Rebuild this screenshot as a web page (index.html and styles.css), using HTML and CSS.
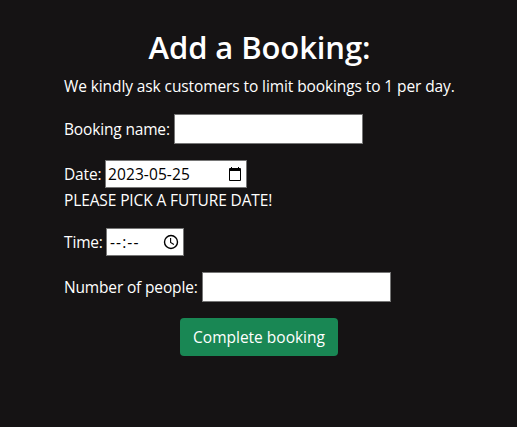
FILE: index.html
```html
<!DOCTYPE html>
<html lang="en">
<head>
<meta charset="utf-8">
<title>Add a Booking</title>
<link rel="stylesheet" href="styles.css">
</head>
<body>
<main class="booking">
  <h1 class="title"><span>Add a Booking:</span></h1>
  <p class="intro"><span>We kindly ask customers to limit bookings to 1 per day.</span></p>
  <form class="form">
    <div class="row">
      <label class="label label-name" for="name">Booking name:</label>
      <input class="field text-field" id="name" type="text">
    </div>
    <div class="row row-date">
      <span class="label label-date">Date:</span>
      <div class="field date-field">
        <span class="date-value">2023-05-25</span>
        <svg class="icon" viewBox="0 0 16 16"><path fill="#000" fill-rule="evenodd" d="M4 1h1v1h6V1h1v1h1q1 0 1 1v11q0 1-1 1H3q-1 0-1-1V3q0-1 1-1h1zM3 5v9h10V5z"/></svg>
      </div>
    </div>
    <p class="error"><span>PLEASE PICK A FUTURE DATE!</span></p>
    <div class="row row-time">
      <span class="label label-time">Time:</span>
      <div class="field time-field">
        <span class="time-value">--:--</span>
        <svg class="icon" viewBox="0 0 16 16" fill="none" stroke="#000"><circle cx="8" cy="8" r="6.500" stroke-width="1.400"/><path stroke-width="1.100" d="M7.600 4v4.500l3.300 2"/></svg>
      </div>
    </div>
    <div class="row">
      <label class="label label-people" for="people">Number of people:</label>
      <input class="field text-field" id="people" type="text">
    </div>
    <button class="submit" type="button">Complete booking</button>
  </form>
</main>
</body>
</html>
```
FILE: styles.css
```css
* {
  box-sizing: border-box;
}

body {
  margin: 0;
  min-height: 427px;
  background: #151314;
  color: #fff;
  font: 15.5px/24px "Open Sans", "Noto Sans", sans-serif;
}

.booking {
  width: 391px;
  margin-left: 64px;
  padding-top: 28px;
  white-space: nowrap;
}

.title {
  margin: 0 0 8px;
  font-size: 31px;
  font-weight: 600;
  line-height: 38px;
  text-align: center;
  letter-spacing: -0.1px;
}

.intro {
  margin: 0 0 16px;
  letter-spacing: -0.1px;
}

.row {
  display: flex;
  align-items: center;
  gap: 4px;
  height: 30px;
  margin-bottom: 16px;
}

.row-date,
.row-time {
  height: 28px;
}

.row-date {
  margin-bottom: 0;
}

.label {
  flex: none;
  letter-spacing: -0.16px;
}

.label-name { width: 106px; }
.label-date { width: 37px; }
.label-time { width: 38px; }
.label-people { width: 134px; }

.field {
  background: #fff;
  color: #000;
  border: 1px solid #767676;
}

.text-field {
  width: 189px;
  height: 30px;
  padding: 1px 2px;
  font: inherit;
}

.date-field,
.time-field {
  display: flex;
  align-items: center;
  justify-content: space-between;
  height: 28px;
}

.date-field {
  width: 142px;
  padding: 0 3px 0 2px;
}

.date-value {
  letter-spacing: 0.1px;
}

.time-field {
  width: 78px;
  padding: 0 4px 0 3px;
}

.time-value {
  letter-spacing: 1.1px;
}

.icon {
  width: 16px;
  height: 16px;
}

.error {
  margin: 0 0 16px;
  letter-spacing: -0.12px;
}

.submit {
  display: block;
  width: 158px;
  height: 38px;
  margin: 0 0 0 116px;
  padding: 0;
  border: 0;
  border-radius: 4px;
  background: #198754;
  color: #fff;
  font: inherit;
}
```
